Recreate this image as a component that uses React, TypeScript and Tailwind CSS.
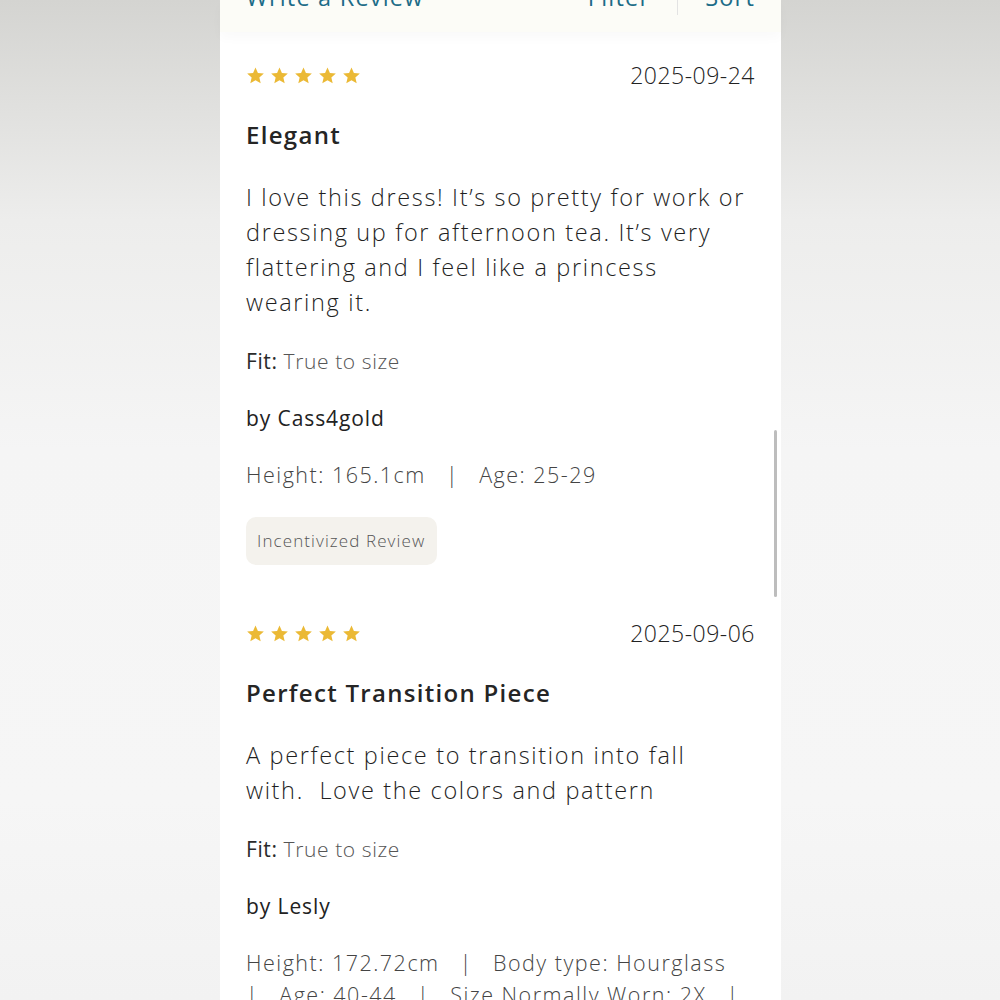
import React from 'react';

interface Review {
    date: string;
    title: string;
    body: string;
    fit: string;
    author: string;
    details: string[];
    incentivized?: boolean;
}

const REVIEWS: Review[] = [
    {
        date: '2025-09-24',
        title: 'Elegant',
        body: 'I love this dress! It\u2019s so pretty for work or dressing up for afternoon tea. It\u2019s very flattering and I feel like a princess wearing it.',
        fit: 'True to size',
        author: 'Cass4gold',
        details: ['Height: 165.1cm', 'Age: 25-29'],
        incentivized: true,
    },
    {
        date: '2025-09-06',
        title: 'Perfect Transition Piece',
        body: 'A perfect piece to transition into fall with.\u00a0 Love the colors and pattern',
        fit: 'True to size',
        author: 'Lesly',
        details: ['Height: 172.72cm', 'Body type: Hourglass', 'Age: 40-44', 'Size Normally Worn: 2X', ''],
    },
];

function Star() {
    return (
        <svg width="19" height="19" viewBox="0 0 24 24" className="shrink-0">
            <path
                d="M12 1.8l3.05 6.9 7.5.7-5.68 4.98 1.68 7.36L12 17.9l-6.55 3.84 1.68-7.36L1.45 9.4l7.5-.7z"
                fill="#ebb935"
            />
        </svg>
    );
}

function ReviewItem({ review }: { review: Review }) {
    return (
        <div className="flex flex-col">
            {/* Stars + date */}
            <div className="flex h-[20px] items-center justify-between">
                <div className="flex gap-[5px]">
                    {[0, 1, 2, 3, 4].map((i) => (
                        <Star key={i} />
                    ))}
                </div>
                <span className="text-[23px] leading-[20px] font-light tracking-[0.5px] text-[#222]">{review.date}</span>
            </div>

            <h3 className="mt-[35px] text-[24px] leading-[30px] font-semibold tracking-[1.3px] text-[#252525]">{review.title}</h3>

            <p className="mt-[30px] pr-[8px] text-[23.5px] leading-[35px] font-light tracking-[1.65px] text-[#1f1f1f]">{review.body}</p>

            <p className="mt-[27px] text-[21px] leading-[28px] tracking-[0.6px] text-[#2a2a2a]">
                Fit: <span className="font-light text-[#555]">{review.fit}</span>
            </p>

            <p className="mt-[29px] text-[21px] leading-[28px] tracking-[0.9px] text-[#222]">by {review.author}</p>

            {/* separators stick to the item after them, so a wrapped line starts with "|" */}
            <p className="mt-[27px] text-[21.5px] leading-[32px] font-light tracking-[1.5px] text-[#444] [word-spacing:0px]">
                {review.details.map((d, idx) => (
                    <React.Fragment key={idx}>
                        {idx > 0 && (
                            <>
                                <span className="[word-spacing:13px]"> </span>
                                <span className="[word-spacing:13px]">|{'\u00a0'}</span>
                            </>
                        )}
                        {d}
                    </React.Fragment>
                ))}
            </p>

            {review.incentivized && (
                <div className="mt-[26px] flex">
                    <span className="rounded-[10px] bg-[#f4f2ed] pl-[11px] pr-[12px] py-[13px] text-[17px] leading-[22px] font-light tracking-[1.1px] text-[#555]">
                        Incentivized Review
                    </span>
                </div>
            )}
        </div>
    );
}

export default function App() {
    return (
        <div
            className="relative h-[1000px] w-[1000px] overflow-hidden bg-[linear-gradient(to_bottom,#d4d4d1_0%,#ededec_22%,#f5f5f5_45%,#f6f6f6_80%,#f2f2f2_100%)]"
            style={{ fontFamily: '"Open Sans", "Noto Sans", sans-serif' }}
        >
            <div className="relative ml-[220px] h-[1000px] w-[561px] bg-white">
                {/* Header (scrolled mostly out of view) */}
                <div className="flex h-[32px] flex-col bg-[#fcfcf7] shadow-[0_6px_12px_rgba(0,0,0,0.025)]">
                    <div className="-mt-[21px] flex items-center justify-between px-[26px] text-[23.5px] leading-[24px] tracking-[1.2px] text-[#1d6c88]">
                        <span>Write a Review</span>
                        <div className="flex items-center">
                            <span>Filter</span>
                            <span className="mx-[27px] h-[36px] w-px bg-[#e3e3e3]" />
                            <span>Sort</span>
                        </div>
                    </div>
                </div>

                {/* Review list */}
                <div className="flex flex-col gap-[58px] px-[26px] pt-[33px]">
                    {REVIEWS.map((r) => (
                        <ReviewItem key={r.date} review={r} />
                    ))}
                </div>

                {/* Scroll indicator */}
                <div className="absolute right-[4px] top-[430px] h-[167px] w-[3px] rounded-full bg-[#bdbdbd]" />
            </div>
        </div>
    );
}
